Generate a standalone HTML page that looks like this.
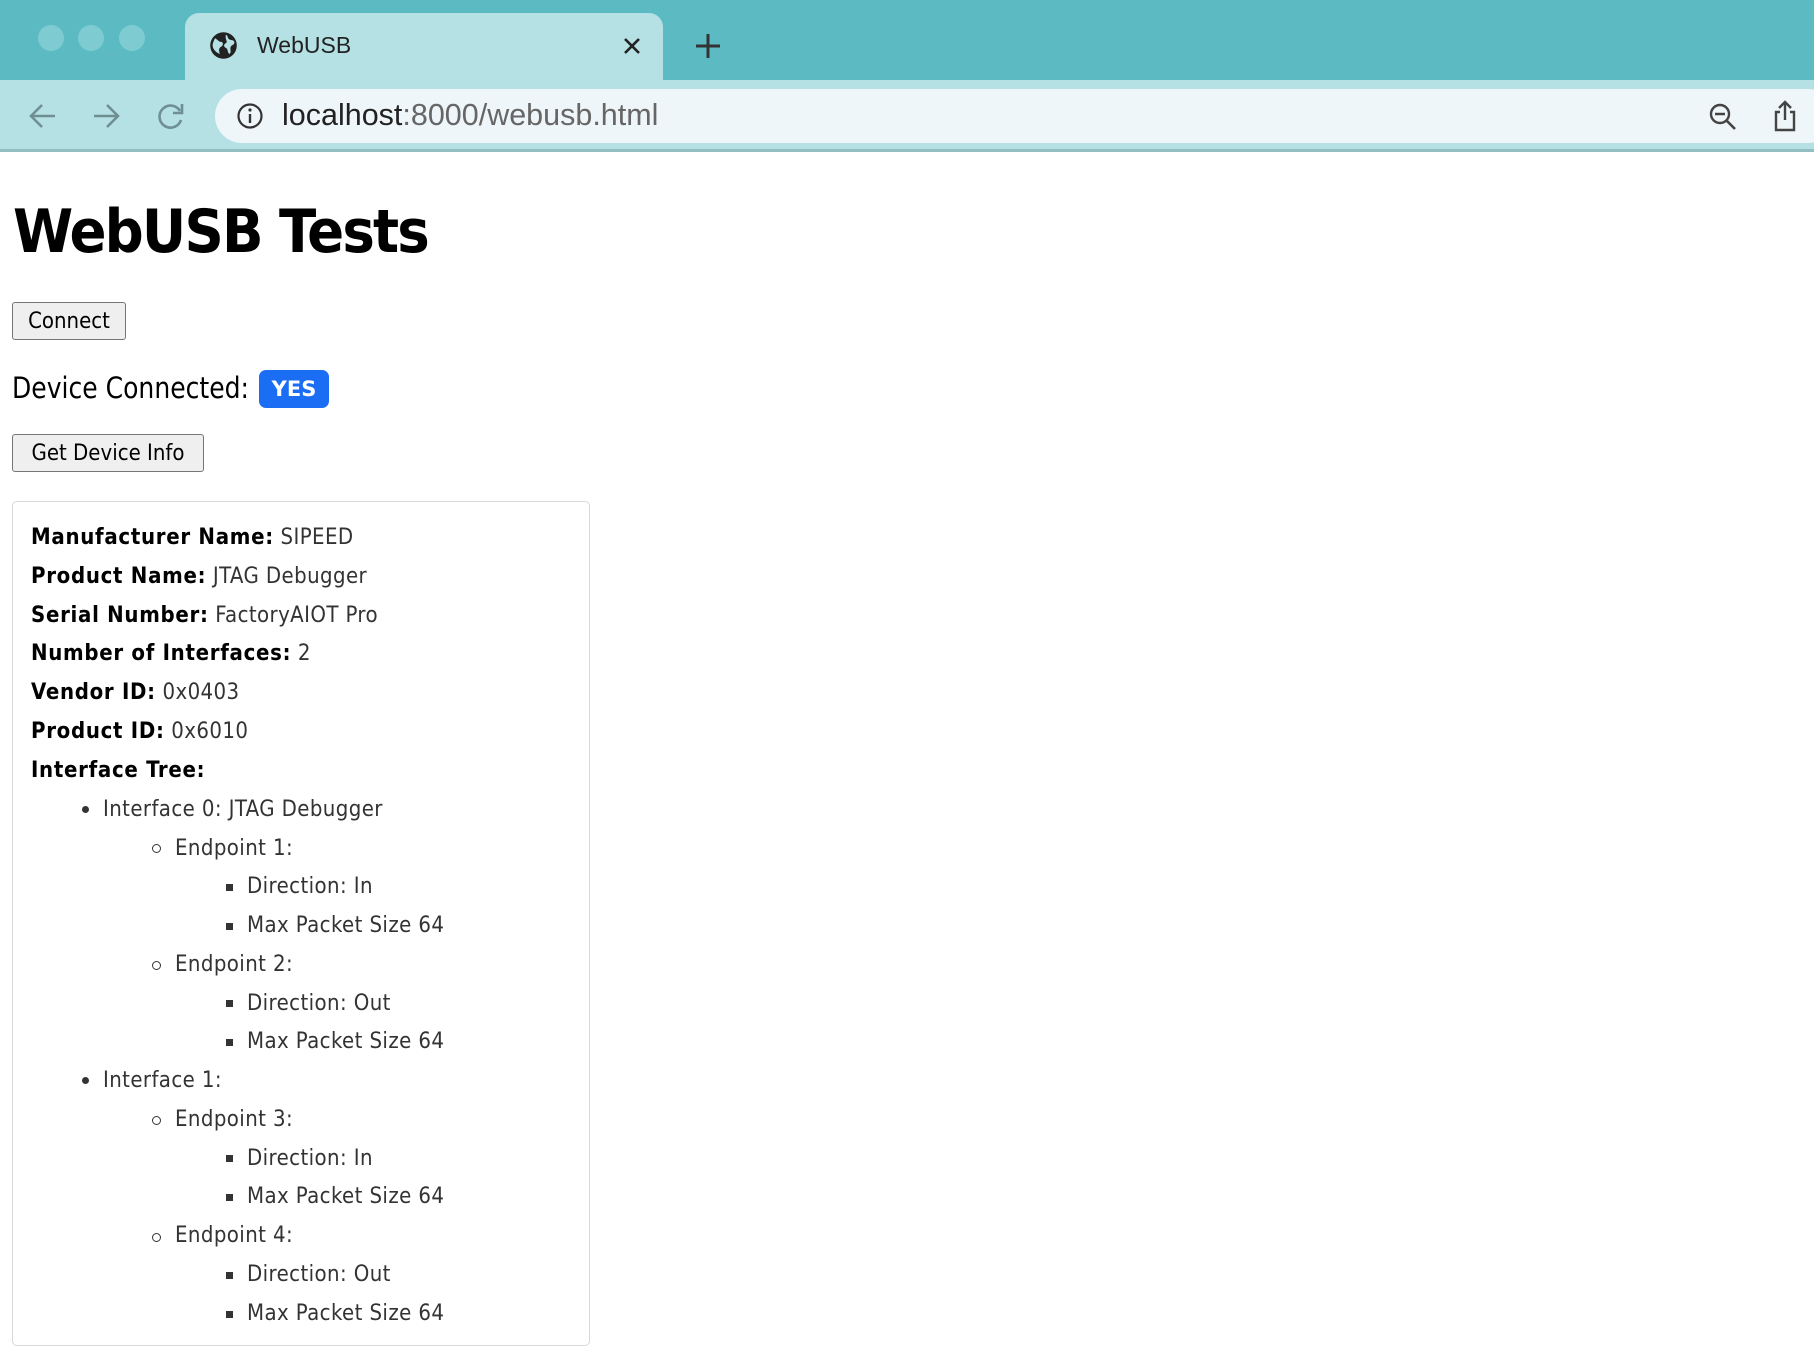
<!DOCTYPE html>
<html><head><meta charset="utf-8"><style>
*{margin:0;padding:0;box-sizing:border-box}
body{width:1814px;height:1372px;background:#fff;font-family:"DejaVu Sans","Liberation Sans",sans-serif;position:relative;overflow:hidden}
.a{position:absolute;white-space:nowrap}
.tabs{position:absolute;left:0;top:0;width:1814px;height:80px;background:#5cbac3}
.tb{position:absolute;left:0;top:80px;width:1814px;height:72px;background:#b5e1e4;border-bottom:3px solid #93bfc3}
.dot{position:absolute;width:26px;height:26px;border-radius:50%;background:#7fcbd2;top:25px}
.tab{position:absolute;left:185px;top:13px;width:478px;height:70px;background:#b5e1e4;border-radius:14px 14px 0 0}
.url{position:absolute;left:215px;top:89px;width:1620px;height:54px;background:#eef6f9;border-radius:27px}
.btn{position:absolute;border:1px solid #767676;border-radius:3px;background:#efefef;font-size:22px;color:#000;display:flex;align-items:center;justify-content:center;font-family:"DejaVu Sans Condensed","DejaVu Sans",sans-serif}
.box{position:absolute;left:12px;top:501px;width:578px;height:845px;border:1px solid #d8d8d8;border-radius:5px}
.l{position:absolute;font-size:22px;color:#333;white-space:nowrap;font-family:"DejaVu Sans Condensed","DejaVu Sans",sans-serif;line-height:30px;letter-spacing:0.4px;margin-top:2px}
.l b{color:#000;letter-spacing:0.7px}
.b1{position:absolute;width:7px;height:7px;border-radius:50%;background:#333}
.b2{position:absolute;width:9px;height:9px;border-radius:50%;border:1.5px solid #333}
.b3{position:absolute;width:7px;height:7px;background:#333}
</style></head><body>
<div class="tabs"></div>
<div class="dot" style="left:38px"></div><div class="dot" style="left:78px"></div><div class="dot" style="left:119px"></div>
<div class="tb"></div>
<div class="tab"></div>
<svg class="a" style="left:209px;top:31px" width="29" height="29" viewBox="0 0 24 24"><circle cx="12" cy="12" r="11" fill="#222"/><path d="M5 6c2 1 3 3 5 3s2 3 0 4-2 3-1 6C6 18 3 15 3 12c0-2 1-4 2-6zM14 3c2 1 1 3 3 4s3 0 4 2c0 3-2 2-3 4s1 4-1 6c-2-1-1-4-3-5s-2-3 0-4-1-3 0-7z" fill="#b5e1e4"/></svg>
<div class="a" style="left:257px;top:32px;font-size:23px;color:#222;font-family:'Liberation Sans',sans-serif">WebUSB</div>
<svg class="a" style="left:622px;top:36px" width="20" height="20" viewBox="0 0 20 20"><path d="M3 3L17 17M17 3L3 17" stroke="#222" stroke-width="2.6"/></svg>
<svg class="a" style="left:694px;top:32px" width="28" height="28" viewBox="0 0 28 28"><path d="M14 2V26M2 14H26" stroke="#333" stroke-width="3"/></svg>
<svg class="a" style="left:28px;top:102px" width="30" height="28" viewBox="0 0 30 28"><path d="M27 14H4M14 3L3 14L14 25" stroke="#6f8f93" stroke-width="2.6" fill="none"/></svg>
<svg class="a" style="left:91px;top:102px" width="30" height="28" viewBox="0 0 30 28"><path d="M3 14H26M16 3L27 14L16 25" stroke="#6f8f93" stroke-width="2.6" fill="none"/></svg>
<svg class="a" style="left:156px;top:102px" width="30" height="28" viewBox="0 0 30 28"><path d="M24 9A11 11 0 1 0 25 18" stroke="#6f8f93" stroke-width="2.6" fill="none"/><path d="M26 2V11H17" stroke="#6f8f93" stroke-width="2.6" fill="none"/></svg>
<div class="url"></div>
<svg class="a" style="left:236px;top:102px" width="28" height="28" viewBox="0 0 28 28"><circle cx="14" cy="14" r="11.5" stroke="#333" stroke-width="2.2" fill="none"/><path d="M14 12V21" stroke="#333" stroke-width="2.4"/><circle cx="14" cy="8" r="1.6" fill="#333"/></svg>
<div class="a" style="left:282px;top:98px;font-size:30.5px;color:#222;font-family:'Liberation Sans',sans-serif">localhost<span style="color:#666">:8000/webusb.html</span></div>
<svg class="a" style="left:1708px;top:102px" width="30" height="30" viewBox="0 0 30 30"><circle cx="12" cy="12" r="9" stroke="#444" stroke-width="2.4" fill="none"/><path d="M7 12H17M19 19L27 27" stroke="#444" stroke-width="2.6"/></svg>
<svg class="a" style="left:1771px;top:99px" width="28" height="34" viewBox="0 0 28 34"><path d="M9 13H5V31H23V13H19M14 21V3M8 9L14 3L20 9" stroke="#444" stroke-width="2.4" fill="none"/></svg>

<div class="a" style="left:13px;top:197px;font-size:60px;font-weight:bold;font-family:'DejaVu Sans',sans-serif;letter-spacing:-2px;transform:scaleX(0.91);transform-origin:left">WebUSB Tests</div>
<div class="btn" style="left:12px;top:302px;width:114px;height:38px">Connect</div>
<div class="a" style="left:12px;top:371px;font-size:29px;font-family:'DejaVu Sans Condensed','DejaVu Sans',sans-serif;transform:scaleX(0.96);transform-origin:left">Device Connected:</div>
<div class="a" style="left:259px;top:370px;width:70px;height:38px;background:#1b6ef3;border-radius:7px;color:#fff;font-weight:bold;font-size:21px;display:flex;align-items:center;justify-content:center;font-family:'DejaVu Sans',sans-serif">YES</div>
<div class="btn" style="left:12px;top:434px;width:192px;height:38px">Get Device Info</div>

<div class="box"></div>
<div class="l" style="left:31px;top:521px"><b>Manufacturer Name:</b> SIPEED</div>
<div class="l" style="left:31px;top:560px"><b>Product Name:</b> JTAG Debugger</div>
<div class="l" style="left:31px;top:599px"><b>Serial Number:</b> FactoryAIOT Pro</div>
<div class="l" style="left:31px;top:637px"><b>Number of Interfaces:</b> 2</div>
<div class="l" style="left:31px;top:676px"><b>Vendor ID:</b> 0x0403</div>
<div class="l" style="left:31px;top:715px"><b>Product ID:</b> 0x6010</div>
<div class="l" style="left:31px;top:754px"><b>Interface Tree:</b></div>

<div class="b1" style="left:82px;top:806px"></div><div class="l" style="left:103px;top:793px">Interface 0: JTAG Debugger</div>
<div class="b2" style="left:152px;top:844px"></div><div class="l" style="left:175px;top:832px">Endpoint 1:</div>
<div class="b3" style="left:226px;top:884px"></div><div class="l" style="left:247px;top:870px">Direction: In</div>
<div class="b3" style="left:226px;top:923px"></div><div class="l" style="left:247px;top:909px">Max Packet Size 64</div>
<div class="b2" style="left:152px;top:961px"></div><div class="l" style="left:175px;top:948px">Endpoint 2:</div>
<div class="b3" style="left:226px;top:1000px"></div><div class="l" style="left:247px;top:987px">Direction: Out</div>
<div class="b3" style="left:226px;top:1039px"></div><div class="l" style="left:247px;top:1025px">Max Packet Size 64</div>
<div class="b1" style="left:82px;top:1077px"></div><div class="l" style="left:103px;top:1064px">Interface 1:</div>
<div class="b2" style="left:152px;top:1116px"></div><div class="l" style="left:175px;top:1103px">Endpoint 3:</div>
<div class="b3" style="left:226px;top:1155px"></div><div class="l" style="left:247px;top:1142px">Direction: In</div>
<div class="b3" style="left:226px;top:1194px"></div><div class="l" style="left:247px;top:1180px">Max Packet Size 64</div>
<div class="b2" style="left:152px;top:1233px"></div><div class="l" style="left:175px;top:1219px">Endpoint 4:</div>
<div class="b3" style="left:226px;top:1272px"></div><div class="l" style="left:247px;top:1258px">Direction: Out</div>
<div class="b3" style="left:226px;top:1311px"></div><div class="l" style="left:247px;top:1297px">Max Packet Size 64</div>
</body></html>
